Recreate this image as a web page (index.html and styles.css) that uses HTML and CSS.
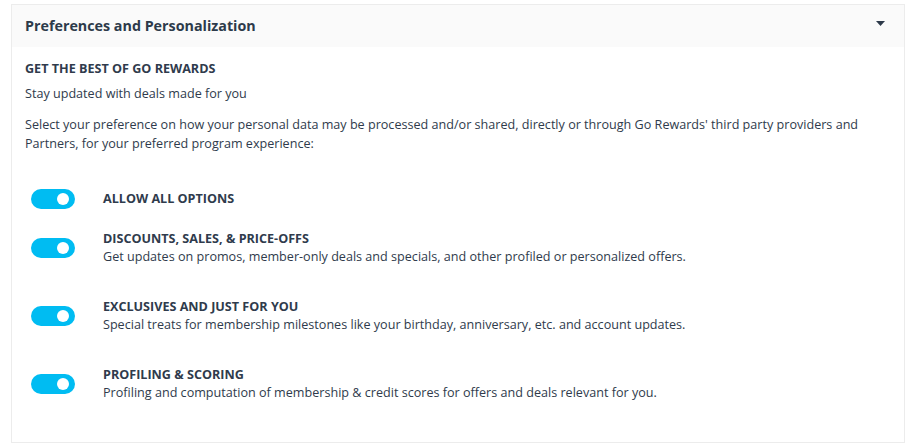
FILE: index.html
```html
<!DOCTYPE html>
<html>
<head>
<meta charset="utf-8">
<link rel="stylesheet" href="styles.css">
</head>
<body>
<div class="card">
  <div class="card-header">
    <span class="card-title">Preferences and Personalization</span>
    <svg class="caret" width="9" height="5" viewBox="0 0 9 5"><path d="M0 0H9L4.5 5Z" fill="#2d3a4a"/></svg>
  </div>
  <div class="card-body">
    <div class="heading">GET THE BEST OF GO REWARDS</div>
    <p class="sub">Stay updated with deals made for you</p>
    <p class="intro">Select your preference on how your personal data may be processed and/or shared, directly or through Go Rewards' third party providers and Partners, for your preferred program experience:</p>
    <div class="options">
      <div class="option">
        <span class="toggle"><span class="knob"></span></span>
        <div class="option-text"><div class="option-title">ALLOW ALL OPTIONS</div></div>
      </div>
      <div class="option second">
        <span class="toggle"><span class="knob"></span></span>
        <div class="option-text">
          <div class="option-title">DISCOUNTS, SALES, &amp; PRICE-OFFS</div>
          <div class="option-desc">Get updates on promos, member-only deals and specials, and other profiled or personalized offers.</div>
        </div>
      </div>
      <div class="option">
        <span class="toggle"><span class="knob"></span></span>
        <div class="option-text">
          <div class="option-title">EXCLUSIVES AND JUST FOR YOU</div>
          <div class="option-desc">Special treats for membership milestones like your birthday, anniversary, etc. and account updates.</div>
        </div>
      </div>
      <div class="option">
        <span class="toggle"><span class="knob"></span></span>
        <div class="option-text">
          <div class="option-title">PROFILING &amp; SCORING</div>
          <div class="option-desc">Profiling and computation of membership &amp; credit scores for offers and deals relevant for you.</div>
        </div>
      </div>
    </div>
  </div>
</div>
</body>
</html>
```

FILE: styles.css
```css
html, body {
  margin: 0;
  padding: 0;
  background: #ffffff;
}
body {
  font-family: "Open Sans", "Liberation Sans", sans-serif;
  color: #2f3b4c;
  font-size: 12.6px;
}
.card {
  margin: 4px 0 0 11px;
  width: 892px;
  height: 437px;
  border: 1px solid #ececec;
  display: flex;
  flex-direction: column;
}
.card-header {
  height: 42px;
  background: #fafafa;
  display: flex;
  align-items: center;
  justify-content: space-between;
  padding: 0 19px 0 13px;
}
.card-title {
  font-size: 14.3px;
  font-weight: 700;
  color: #2d3a4a;
  margin-top: -1px;
}
.caret {
  margin-top: -6px;
}
.card-body {
  padding: 13px 13px 0 13px;
}
.heading {
  font-weight: 700;
  line-height: 18px;
}
.sub {
  margin: 7px 0 0 0;
  line-height: 18px;
}
.intro {
  margin: 12px 0 0 0;
  line-height: 19px;
}
.options {
  margin-top: 36px;
  padding-left: 6px;
  display: flex;
  flex-direction: column;
  gap: 32px;
}
.option.second {
  margin-top: -11px;
}
.option {
  display: flex;
  align-items: center;
}
.toggle {
  width: 44px;
  height: 20px;
  border-radius: 10px;
  background: #00bcf2;
  position: relative;
  flex: none;
  margin-right: 28px;
}
.knob {
  position: absolute;
  width: 12px;
  height: 12px;
  border-radius: 50%;
  background: #ffffff;
  top: 4px;
  right: 6px;
}
.option-title {
  font-weight: 700;
  line-height: 18px;
}
.option-desc {
  line-height: 18px;
}
```
